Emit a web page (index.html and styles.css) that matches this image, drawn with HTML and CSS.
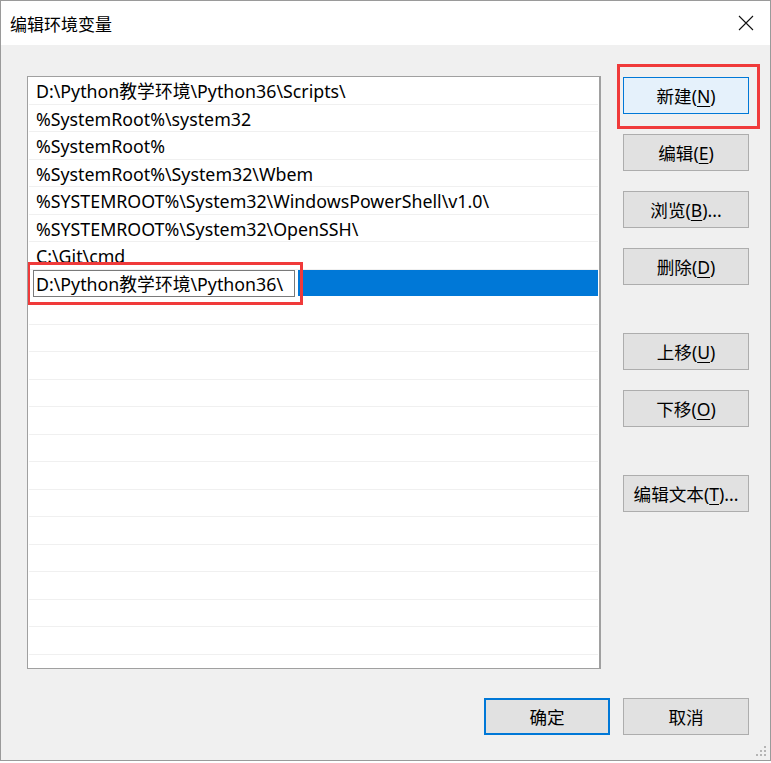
FILE: index.html
```html
<!DOCTYPE html>
<html lang="zh-CN">
<head>
<meta charset="utf-8">
<title>编辑环境变量</title>
<link rel="stylesheet" href="styles.css">
</head>
<body>
<div class="window">
  <div class="titlebar">
    <span class="title">编辑环境变量</span>
    <svg class="close" width="16" height="16" viewBox="0 0 16 16"><path d="M1 1 L15 15 M15 1 L1 15" stroke="#111" stroke-width="1.1" fill="none"/></svg>
  </div>
  <div class="content">
    <div class="main">
      <div class="list">
        <div class="row">D:\Python教学环境\Python36\Scripts\</div>
        <div class="row">%SystemRoot%\system32</div>
        <div class="row">%SystemRoot%</div>
        <div class="row">%SystemRoot%\System32\Wbem</div>
        <div class="row">%SYSTEMROOT%\System32\WindowsPowerShell\v1.0\</div>
        <div class="row">%SYSTEMROOT%\System32\OpenSSH\</div>
        <div class="row">C:\Git\cmd</div>
        <div class="row editing">
          <div class="editbox">D:\Python教学环境\Python36\</div>
          <div class="selfill"></div>
        </div>
        <div class="row"></div><div class="row"></div><div class="row"></div><div class="row"></div>
        <div class="row"></div><div class="row"></div><div class="row"></div><div class="row"></div>
        <div class="row"></div><div class="row"></div><div class="row"></div><div class="row"></div>
        <div class="row"></div><div class="row"></div>
        <div class="mark mark-edit"></div>
      </div>
      <div class="buttons">
        <div class="btn-wrap">
          <button class="btn btn-hot">新建(<u>N</u>)</button>
          <div class="mark mark-new"></div>
        </div>
        <button class="btn">编辑(<u>E</u>)</button>
        <button class="btn">浏览(<u>B</u>)...</button>
        <button class="btn">删除(<u>D</u>)</button>
        <button class="btn btn-group">上移(<u>U</u>)</button>
        <button class="btn">下移(<u>O</u>)</button>
        <button class="btn btn-group">编辑文本(<u>T</u>)...</button>
      </div>
    </div>
    <div class="footer">
      <button class="btn btn-default">确定</button>
      <button class="btn">取消</button>
    </div>
    <svg class="grip" width="12" height="12" viewBox="0 0 12 12">
      <rect x="9" y="1" width="2" height="2" fill="#b5b5b5"/>
      <rect x="5" y="5" width="2" height="2" fill="#b5b5b5"/>
      <rect x="9" y="5" width="2" height="2" fill="#b5b5b5"/>
      <rect x="1" y="9" width="2" height="2" fill="#b5b5b5"/>
      <rect x="5" y="9" width="2" height="2" fill="#b5b5b5"/>
      <rect x="9" y="9" width="2" height="2" fill="#b5b5b5"/>
    </svg>
  </div>
</div>
</body>
</html>
```

FILE: styles.css
```css
* { box-sizing: border-box; }
html, body { margin: 0; padding: 0; background: #ffffff; }
body {
  font-family: "Noto Sans", "Noto Sans CJK SC", sans-serif;
  color: #000;
}
.window {
  width: 771px;
  height: 761px;
  border: 1px solid #9a9a9a;
  display: flex;
  flex-direction: column;
  background: #f0f0f0;
}
.titlebar {
  height: 44px;
  background: #ffffff;
  display: flex;
  align-items: center;
  justify-content: space-between;
  padding: 0 16px 0 9px;
}
.title {
  font-family: "Noto Sans CJK SC", sans-serif;
  font-size: 17px;
}
.close { display: block; }
.content {
  flex: 1;
  position: relative;
  padding: 31px 20px 0 26px;
}
.main {
  display: flex;
  gap: 22px;
  align-items: flex-start;
}
.list {
  position: relative;
  width: 574px;
  height: 593px;
  background: #fff;
  border: 1px solid #a0a0a0;
  border-right-width: 2px;
  overflow: hidden;
  padding-right: 1px;
}
.row {
  height: 27.5px;
  border-bottom: 1px solid #f0f0f0;
  font-size: 17.8px;
  line-height: 28px;
  padding-left: 7px;
  white-space: nowrap;
  margin-left: 1px;
}
.row.editing {
  display: flex;
  align-items: stretch;
  padding-left: 4px;
  border-bottom-color: #fff;
}
.editbox {
  width: 262px;
  height: 27px;
  border: 1px solid #7a7a7a;
  background: #fff;
  padding-left: 2px;
  line-height: 26px;
  font-size: 17.8px;
  overflow: hidden;
}
.selfill {
  flex: 1;
  margin-left: 3px;
  background: #0078d7;
}
.mark {
  position: absolute;
  border: 3px solid #f03a3a;
  pointer-events: none;
}
.mark-edit {
  left: -1px;
  top: 185px;
  width: 276px;
  height: 43px;
}
.buttons {
  display: flex;
  flex-direction: column;
  gap: 20px;
  padding-top: 1px;
}
.btn-wrap { position: relative; }
.mark-new {
  left: -6px;
  top: -13px;
  width: 143px;
  height: 65px;
}
.btn {
  width: 126px;
  height: 37px;
  margin: 0;
  padding: 0;
  font-family: "Noto Sans", "Noto Sans CJK SC", sans-serif;
  font-size: 17.6px;
  color: #000;
  background: #e1e1e1;
  border: 1px solid #adadad;
  display: block;
}
.btn u { text-decoration-thickness: 1px; text-underline-offset: 3px; }
.btn-hot {
  background: #e5f1fb;
  border-color: #0078d7;
}
.btn-group { margin-top: 28px; }
.footer {
  display: flex;
  justify-content: flex-end;
  gap: 13px;
  margin-top: 29px;
  padding-right: 1px;
}
.btn-default {
  border: 2px solid #0078d7;
}
.grip {
  position: absolute;
  right: 3px;
  bottom: 3px;
}
```
